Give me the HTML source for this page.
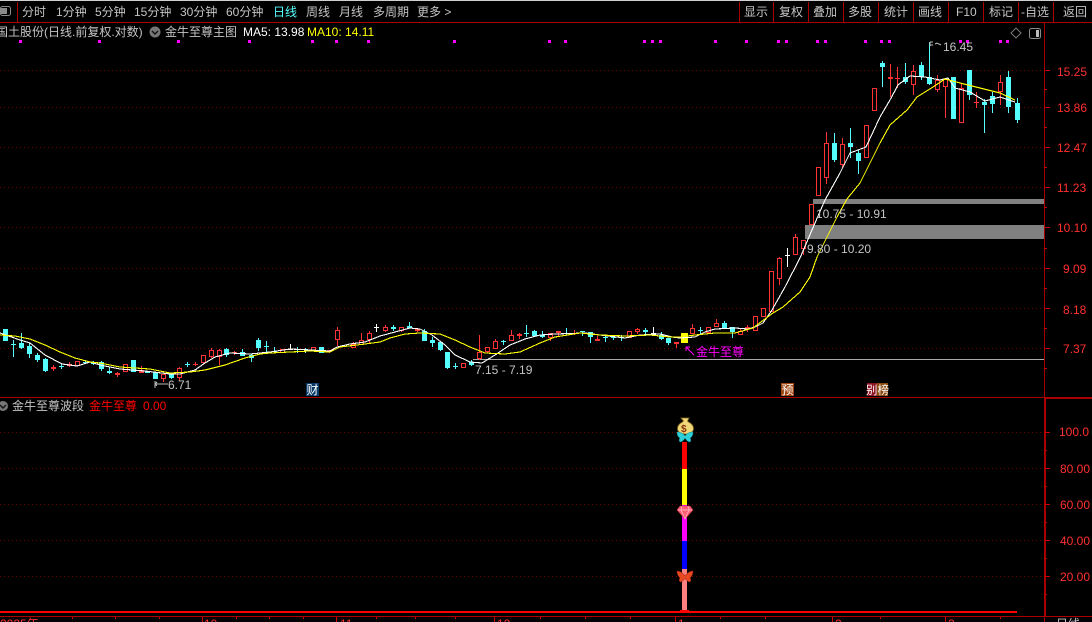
<!DOCTYPE html>
<html><head><meta charset="utf-8"><style>
html,body{margin:0;padding:0;background:#000;width:1092px;height:622px;overflow:hidden}
svg{position:absolute;left:0;top:0;display:block}
text{font-family:"Liberation Sans","WenQuanYi Zen Hei","Noto Sans CJK SC",sans-serif;font-size:12px}
.t{fill:#c4c4c4}.a{fill:#ff3030}
</style></head><body>
<svg width="1092" height="622" viewBox="0 0 1092 622" xmlns="http://www.w3.org/2000/svg">
<rect width="1092" height="622" fill="#000"/>
<rect width="1092" height="1" fill="#d0d0d0"/>
<!-- grid -->
<g stroke="#720000" stroke-width="1" stroke-dasharray="1 3" shape-rendering="crispEdges">
<path d="M0 70.5H1044M0 107.5H1044M0 147.5H1044M0 187.5H1044M0 227.5H1044M0 268.5H1044M0 308.5H1044M0 348.5H1044"/>
<path d="M0 432.5H1041M0 468.5H1041M0 504.5H1041M0 540.5H1041M0 576.5H1041"/>
</g>
<!-- frame -->
<g fill="#a80000" shape-rendering="crispEdges">
<rect x="0" y="22" width="1092" height="1"/>
<rect x="0" y="397" width="1092" height="1"/>
<rect x="1045" y="397" width="47" height="2"/>
<rect x="0" y="616" width="1092" height="1"/>
<rect x="1044" y="23" width="1" height="599"/>
<rect x="1044" y="398" width="2" height="219"/>
<rect x="17" y="2" width="1" height="20"/>
<rect x="739" y="2" width="1" height="20"/><rect x="773" y="2" width="1" height="20"/><rect x="808" y="2" width="1" height="20"/><rect x="843" y="2" width="1" height="20"/><rect x="878" y="2" width="1" height="20"/><rect x="913" y="2" width="1" height="20"/><rect x="948" y="2" width="1" height="20"/><rect x="983" y="2" width="1" height="20"/><rect x="1018" y="2" width="1" height="20"/><rect x="1053" y="2" width="1" height="20"/>
</g>
<path stroke="#c80000" stroke-width="1" shape-rendering="crispEdges" d="M1045 70.5h5M1045 107.5h5M1045 147.5h5M1045 187.5h5M1045 227.5h5M1045 268.5h5M1045 308.5h5M1045 348.5h5M1045 89.5h2M1045 127.5h2M1045 167.5h2M1045 207.5h2M1045 248.5h2M1045 288.5h2M1045 328.5h2M1045 368.5h2M1045 432.5h5M1045 468.5h5M1045 504.5h5M1045 540.5h5M1045 576.5h5M1045 450.5h2M1045 486.5h2M1045 522.5h2M1045 558.5h2M1045 594.5h2M72.5 617v2M115.5 617v2M159.5 617v2M202.5 617v5M236.5 617v2M269.5 617v2M303.5 617v2M336.5 617v5M376.5 617v2M415.5 617v2M455.5 617v2M494.5 617v5M540.5 617v2M585.5 617v2M630.5 617v2M675.5 617v5M720.5 617v2M765.5 617v2M832.5 617v5M880.5 617v2M945.5 617v5M1000.5 617v2"/>
<!-- toolbar icons -->
<rect x="0.5" y="6.5" width="10" height="9" rx="2" fill="none" stroke="#8a8a8a"/><rect x="1" y="8" width="6" height="6" fill="#8a8a8a"/>
<path d="M1016 28l5 5-5 5-5-5z" fill="none" stroke="#777"/>
<rect x="1029.5" y="28.5" width="11" height="10" rx="2" fill="none" stroke="#8a8a8a"/><rect x="1036" y="30" width="3" height="7" fill="#bbb"/>
<!-- toolbar text -->
<g class="t">
<text x="22" y="16">分时</text><text x="56" y="16">1分钟</text><text x="95" y="16">5分钟</text><text x="134" y="16">15分钟</text><text x="180" y="16">30分钟</text><text x="226" y="16">60分钟</text>
<text x="273" y="16" style="fill:#55ffff">日线</text><text x="306" y="16">周线</text><text x="339" y="16">月线</text><text x="373" y="16">多周期</text><text x="417" y="16">更多 &gt;</text>
<text x="744" y="16">显示</text><text x="779" y="16">复权</text><text x="813" y="16">叠加</text><text x="848" y="16">多股</text><text x="884" y="16">统计</text><text x="918" y="16">画线</text><text x="956" y="16">F10</text><text x="989" y="16">标记</text><text x="1021" y="16">-自选</text><text x="1063" y="16">返回</text>
<text x="-4" y="36">国土股份(日线.前复权.对数)</text>
<text x="165" y="36">金牛至尊主图</text>
<text x="12" y="410">金牛至尊波段</text>
</g>
<text x="243" y="36" fill="#fff">MA5: 13.98</text>
<text x="307" y="36" fill="#ffff00">MA10: 14.11</text>
<circle cx="155" cy="32" r="5.5" fill="#777"/><path d="M152 31l3 3 3-3" fill="none" stroke="#111" stroke-width="1.4"/>
<circle cx="3" cy="406" r="5" fill="#777"/><path d="M0 405l3 3 3-3" fill="none" stroke="#111" stroke-width="1.4"/>
<text x="89" y="410" fill="#ff0000">金牛至尊</text><text x="143" y="410" fill="#ff0000">0.00</text>
<!-- magenta dots -->
<path fill="#ff00ff" shape-rendering="crispEdges" d="M19 40h3v3h-3zM98 40h3v3h-3zM177 40h3v3h-3zM248 40h3v3h-3zM311 40h3v3h-3zM335 40h3v3h-3zM367 40h3v3h-3zM453 40h3v3h-3zM548 40h3v3h-3zM564 40h3v3h-3zM643 40h3v3h-3zM651 40h3v3h-3zM659 40h3v3h-3zM714 40h3v3h-3zM745 40h3v3h-3zM777 40h3v3h-3zM785 40h3v3h-3zM816 40h3v3h-3zM824 40h3v3h-3zM864 40h3v3h-3zM880 40h3v3h-3zM888 40h3v3h-3zM959 40h3v3h-3zM966 40h3v3h-3zM999 40h3v3h-3zM1006 40h3v3h-3z"/>
<!-- zones -->
<g fill="#808080" shape-rendering="crispEdges">
<rect x="813" y="199" width="231" height="5"/>
<rect x="805" y="225" width="239" height="14"/>
<rect x="473" y="359" width="571" height="1" fill="#aaa"/>
</g>
<!-- candles -->
<g shape-rendering="crispEdges">
<path stroke="#55ffff" fill="none" d="M5.5 329V341M13.5 340V357M21.5 333V349M29.5 343V358M37.5 353V362M45.5 358V372M61.5 363V369M85.5 360V364M93.5 361V365M101.5 361V371M109.5 367V374M133.5 360V372M147.5 371V373M155.5 372V379M171.5 373V379M187.5 362V367M226.5 348V357M242.5 349V356M251.5 354V362M258.5 338V351M266.5 341V353M274.5 347V353M297.5 347V353M305.5 348V353M321.5 347V353M393.5 325V331M409.5 322V328M424.5 329V341M432.5 337V347M440.5 342V351M447.5 352V369M455.5 363V369M471.5 360V366M503.5 340V345M526.5 325V337M534.5 330V336M542.5 331V338M566.5 328V335M582.5 331V336M590.5 332V343M605.5 336V342M613.5 335V340M621.5 335V341M645.5 328V336M661.5 332V340M668.5 338V345M700.5 327V334M724.5 321V329M732.5 327V338M834.5 133V162M850.5 128V158M858.5 150V174M882.5 61V87M905.5 63V84M921.5 62V80M929.5 42V85M953.5 77V119M969.5 70V100M984.5 99V133M992.5 92V113M1008.5 71V113M1017.5 98V123"/>
<path fill="#55ffff" d="M3 329h5v12h-5zM11 344h5v1h-5zM19 343h5v5h-5zM27 346h5v8h-5zM35 355h5v5h-5zM43 359h5v12h-5zM59 366h5v1h-5zM83 362h5v1h-5zM91 362h5v2h-5zM99 362h5v7h-5zM107 371h5v2h-5zM131 360h5v12h-5zM145 371h5v2h-5zM153 372h5v7h-5zM169 374h5v4h-5zM185 364h5v1h-5zM224 349h5v6h-5zM240 352h5v4h-5zM249 355h5v3h-5zM256 340h5v8h-5zM264 346h5v1h-5zM272 351h5v1h-5zM295 349h5v1h-5zM303 349h5v1h-5zM319 347h5v6h-5zM391 327h5v2h-5zM407 326h5v2h-5zM422 331h5v10h-5zM430 340h5v3h-5zM438 342h5v8h-5zM445 352h5v16h-5zM453 366h5v1h-5zM469 362h5v3h-5zM501 341h5v1h-5zM524 333h5v1h-5zM532 331h5v5h-5zM540 335h5v2h-5zM564 333h5v1h-5zM580 331h5v1h-5zM588 332h5v5h-5zM603 337h5v1h-5zM611 337h5v1h-5zM619 337h5v1h-5zM643 330h5v2h-5zM659 335h5v4h-5zM666 338h5v5h-5zM698 330h5v1h-5zM722 323h5v5h-5zM730 327h5v5h-5zM832 143h5v17h-5zM848 143h5v4h-5zM856 153h5v8h-5zM880 63h5v4h-5zM903 77h5v5h-5zM919 65h5v12h-5zM927 77h5v7h-5zM951 77h5v42h-5zM967 70h5v25h-5zM982 102h5v3h-5zM990 96h5v8h-5zM1006 77h5v30h-5zM1015 103h5v17h-5z"/>
<path stroke="#ff3333" fill="none" d="M53.5 365V371M69.5 362V367M77.5 361V366M117.5 372V377M141.5 366V373M163.5 374V382M179.5 367V381M195.5 362V366M211.5 348V358M219.5 349V365M234.5 351V355M329.5 350V353M337.5 327V346M353.5 342V348M361.5 333V345M369.5 331V343M385.5 325V332M401.5 327V332M417.5 329V332M479.5 335V360M487.5 347V353M495.5 339V349M511.5 330V341M519.5 333V339M550.5 333V341M558.5 331V337M574.5 330V335M597.5 336V341M637.5 328V334M676.5 342V348M692.5 324V334M716.5 319V327M740.5 329V335M747.5 325V332M779.5 257V285M795.5 234V255M803.5 240V255M826.5 132V184M842.5 138V168M890.5 64V97M897.5 67V88M913.5 65V95M937.5 75V92M945.5 78V118M961.5 83V123M976.5 92V108M1000.5 75V105"/>
<path fill="#ff3333" d="M51 367h5v2h-5zM67 364h5v2h-5zM115 373h5v2h-5zM139 370h5v3h-5zM193 364h5v1h-5zM232 352h5v1h-5zM327 350h5v2h-5zM415 329h5v2h-5zM556 331h5v2h-5zM572 333h5v1h-5zM595 339h5v2h-5zM674 342h5v2h-5zM745 327h5v2h-5zM888 77h5v2h-5zM895 78h5v1h-5zM974 102h5v1h-5z"/>
<path stroke="#ff3333" fill="#000" d="M75.5 361.5h4V365.500h-4zM123.500 364.5h4V371.5h-4zM161.500 374.5h4V378.5h-4zM177.5 368.5h4V377.5h-4zM201.5 355.5h4V362.5h-4zM209.5 350.5h4V356.5h-4zM217.5 350.5h4V356.5h-4zM280.5 349.5h4V352.5h-4zM311.5 347.5h4V350.5h-4zM335.5 330.5h4V339.5h-4zM351.5 344.5h4V347.5h-4zM359.5 340.5h4V344.5h-4zM367.5 333.5h4V339.5h-4zM383.5 327.5h4V330.5h-4zM399.5 327.5h4V330.5h-4zM461.5 363.5h4V367.5h-4zM477.5 352.5h4V358.5h-4zM485.5 347.5h4V351.5h-4zM493.5 341.5h4V348.5h-4zM509.5 335.5h4V340.5h-4zM517.5 334.5h4V335.5h-4zM548.5 333.5h4V337.5h-4zM627.5 331.5h4V337.5h-4zM635.5 329.5h4V331.5h-4zM690.500 328.5h4V333.5h-4zM706.5 327.5h4V332.5h-4zM714.5 323.5h4V326.5h-4zM738.5 331.5h4V334.5h-4zM753.5 316.5h4V330.5h-4zM761.5 308.5h4V316.5h-4zM769.5 271.5h4V311.5h-4zM777.5 258.5h4V278.5h-4zM793.5 237.5h4V254.5h-4zM801.5 240.5h4V248.5h-4zM809.5 204.5h4V224.5h-4zM816.5 167.5h4V195.5h-4zM824.5 143.5h4V177.5h-4zM840.5 144.500h4V164.5h-4zM864.5 125.5h4V157.5h-4zM872.5 88.5h4V110.5h-4zM911.5 71.5h4V84.5h-4zM935.5 80.5h4V89.5h-4zM943.5 79.5h4V86.5h-4zM959.5 88.5h4V122.5h-4zM998.5 82.5h4V91.5h-4z"/>
<path stroke="#fff" fill="none" d="M290.5 344V350M288 349.500h5M376.500 324V332M374 327.500h5M653.500 327V335M651 333.500h5M787.500 248V267M785 255.500h5"/>
<rect x="681" y="333" width="7" height="10" fill="#ffff00"/>
<!-- MA lines -->
<polyline fill="none" stroke="#fff" stroke-width="1.1" points="0,333 20,340 30,343 45,355 62,364 77,366 90,362 100,365 120,369 145,371 170,374 180,374 195,370 205,363 215,357 230,353 250,354 270,352 290,349 330,351 337,347 350,344 365,342 380,336 395,332 410,328 420,329 432,335 445,345 455,355 470,362 482,363 495,355 510,345 525,339 540,335 555,334 585,333 600,335 625,338 640,335 660,334 672,337 680,338 695,337 705,332 715,329 735,328 748,329 755,327 763,323 772,310 785,287 800,258 815,223 825,200 840,173 850,153 866,147 880,117 890,100 898,85 910,76 925,77 940,80 948,78 955,88 970,92 985,101 1000,97 1015,102"/>
<polyline fill="none" stroke="#ffff00" stroke-width="1.1" points="0,335 15,336 30,339 45,345 60,352 75,358 90,362 100,363 120,367 150,369 170,373 190,372 205,370 225,365 245,358 260,354 270,353 310,351 330,352 340,347 365,344 380,342 390,338 405,334 420,333 440,334 455,340 470,347 485,353 505,354 520,352 540,343 555,337 580,333 600,335 625,336 650,335 670,337 680,337 695,335 715,333 735,333 753,328 773,313 783,307 800,292 810,277 817,257 827,237 837,217 847,199 860,183 870,163 880,143 890,125 907,110 917,97 933,87 945,79 960,83 980,88 1000,93 1015,100"/>
</g>
<!-- annotations -->
<path d="M155 381v7M156 384h12M157 382l-2 2 2 2" fill="none" stroke="#bbb" shape-rendering="crispEdges"/>
<text x="168" y="389" class="t">6.71</text>
<text x="475" y="374" class="t">7.15 - 7.19</text>
<text x="816" y="218" class="t">10.75 - 10.91</text>
<text x="807" y="253" class="t">9.80 - 10.20</text>
<path d="M930 42h3M930 45h3M930 42v4M935 44l2-1 4 2" fill="none" stroke="#bbb"/>
<text x="943" y="51" class="t">16.45</text>
<path d="M694 355l-8-8M686 347v4M686 347h4" fill="none" stroke="#ff00ff"/>
<text x="696" y="356" fill="#ff00ff">金牛至尊</text>
<!-- event markers -->
<rect x="306" y="383" width="13" height="13" fill="#0a3a6a"/><text x="306.500" y="394" fill="#fff">财</text>
<rect x="781" y="383" width="13" height="13" fill="#a04412"/><text x="781.500" y="394" fill="#fff">预</text>
<rect x="867" y="383" width="10" height="13" fill="#8b1020"/><rect x="877" y="383" width="11" height="13" fill="#8a4a10"/><text x="866" y="394" fill="#fff" style="font-size:11.500px">别榜</text>
<!-- axis labels -->
<g class="a">
<text x="1057" y="76">15.25</text><text x="1057" y="112">13.86</text><text x="1057" y="152">12.47</text><text x="1057" y="192">11.23</text><text x="1057" y="232">10.10</text><text x="1063" y="273">9.09</text><text x="1063" y="314">8.18</text><text x="1063" y="353">7.37</text>
<text x="1059" y="436">100.0</text><text x="1060" y="473">80.00</text><text x="1060" y="509">60.00</text><text x="1060" y="545">40.00</text><text x="1060" y="581">20.00</text>
</g>
<g fill="#ff3030">
<text x="0" y="628">2025年</text><text x="204" y="628">10</text><text x="340" y="628">11</text><text x="497" y="628">12</text><text x="678" y="628">1</text><text x="835" y="628">2</text><text x="948" y="628">3</text>
</g>
<text x="1056" y="628" class="t">日线</text>
<!-- indicator column -->
<g shape-rendering="crispEdges">
<rect x="682" y="442" width="5" height="27" fill="#ff0000"/>
<rect x="682" y="469" width="5" height="36" fill="#ffff00"/>
<rect x="682" y="505" width="5" height="36" fill="#ff00ff"/>
<rect x="682" y="541" width="5" height="28" fill="#0000ff"/>
<rect x="682" y="569" width="5" height="43" fill="#ff8080"/>
<rect x="0" y="611" width="1017" height="2" fill="#ff0000"/>
<rect x="680" y="610" width="9" height="2" fill="#ff0000"/>
</g>
<!-- money bag -->
<path d="M681 418h8l-1.500 3 1 1c3 1.500 5 4 5 6.500 0 3.500-3.500 5.500-8 5.500s-8-2-8-5.500c0-2.500 2-5 5-6.500l1-1z" fill="#f0d878" stroke="#8a6a20" stroke-width=".8"/>
<text x="681" y="432" fill="#8a3010" style="font-size:10px;font-weight:bold">$</text>
<!-- cyan butterfly -->
<path d="M685 436c-2-3-5-4-8-4 0 3 1 5 3 6-1 1-1 3 0 4 2 0 4-2 5-4 1 2 3 4 5 4 1-1 1-3 0-4 2-1 3-3 3-6-3 0-6 1-8 4z" fill="#30d0d8" stroke="#108890" stroke-width=".5"/>
<!-- diamond -->
<path d="M680 506h10l3 4-8 9-8-9z" fill="#ff6078" stroke="#c03040" stroke-width=".6"/>
<path d="M678 510h14M682 506l-1 4 4 9 4-9-1-4" fill="none" stroke="#ffc0c8" stroke-width=".7"/>
<!-- red butterfly -->
<path d="M685 576c-2-3-5-5-8-5 0 3 1 5 3 7-1 1-1 3 0 4 2 0 4-2 5-4 1 2 3 4 5 4 1-1 1-3 0-4 2-2 3-4 3-7-3 0-6 2-8 5z" fill="#e84820" stroke="#901808" stroke-width=".5"/>
</svg>
</body></html>
